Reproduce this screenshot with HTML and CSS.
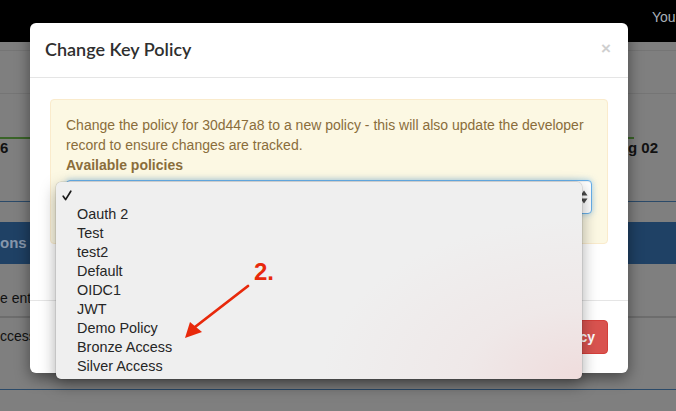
FILE: index.html
```html
<!DOCTYPE html>
<html lang="en">
<head>
<meta charset="utf-8">
<title>Change Key Policy</title>
<link rel="stylesheet" href="styles.css">
</head>
<body>
<div class="page">
  <header class="nav"><span class="nav-user">Your Account</span></header>
  <div class="sec s1"></div>
  <div class="sec s2"></div>
  <div class="sec s3"></div>
  <div class="tabline"><i class="tab-on"></i><i></i><i class="tab-on"></i><i></i></div>
  <div class="stats"><b class="stat-l">6</b><b class="stat-r">g 02</b></div>
  <div class="band"><span class="band-text">ons</span></div>
  <div class="row r-enter"><span>e entry</span></div>
  <div class="row r-access"><span>ccess</span></div>
</div>

<div class="modal">
  <div class="modal-header">
    <h4 class="modal-title">Change Key Policy</h4>
    <span class="close">&times;</span>
  </div>
  <div class="modal-body">
    <div class="alert">
      <p class="alert-text">Change the policy for 30d447a8 to a new policy - this will also update the developer record to ensure changes are tracked.</p>
      <label class="alert-label">Available policies</label>
      <div class="select">
        <svg class="select-arrows" width="8" height="14" viewBox="0 0 8 14"><path d="M4 0.5 L7.5 5.5 L0.5 5.5 Z M4 13.5 L7.5 8.5 L0.5 8.5 Z" fill="#4a4a4a"/></svg>
      </div>
    </div>
  </div>
  <div class="modal-footer">
    <button class="btn-danger">Change Policy</button>
  </div>
</div>

<ul class="popup">
  <li class="opt checked"><svg class="check" width="10" height="11" viewBox="0 0 10 11"><path d="M1.2 6.2 L3.6 9.6 L8.8 1.2" fill="none" stroke="#1a1a1a" stroke-width="1.7" stroke-linecap="round" stroke-linejoin="round"/></svg></li>
  <li class="opt">Oauth 2</li>
  <li class="opt">Test</li>
  <li class="opt">test2</li>
  <li class="opt">Default</li>
  <li class="opt">OIDC1</li>
  <li class="opt">JWT</li>
  <li class="opt">Demo Policy</li>
  <li class="opt">Bronze Access</li>
  <li class="opt">Silver Access</li>
</ul>

<span class="note">2.</span>
<svg class="arrow" width="80" height="100" viewBox="180 250 80 100">
  <line x1="248" y1="286" x2="195" y2="327" stroke="#e8290b" stroke-width="2.8" stroke-linecap="round"/>
  <path d="M185 338 L190 322 L202 332 Z" fill="#e8290b"/>
</svg>
</body>
</html>
```

FILE: styles.css
```css
* { box-sizing: border-box; }

html, body {
  margin: 0;
  padding: 0;
}

body {
  width: 676px;
  height: 411px;
  overflow: hidden;
  background: #7f7f7f;
  font-family: "Liberation Sans", Arial, sans-serif;
  font-size: 14px;
  color: #333;
  position: relative;
}

/* ---------- dimmed page behind the modal ---------- */
.page {
  width: 676px;
}

.nav {
  height: 42px;
  background: #000;
  padding-left: 652px;
  display: flex;
  align-items: center;
  white-space: nowrap;
  overflow: hidden;
}

.nav-user {
  color: #a9b0b8;
  font-size: 14px;
  margin-top: -8px;
}

.sec { border-bottom: 1px solid #757575; }
.s1 { height: 9px; }
.s2 { height: 43px; }
.s3 { height: 43px; border-bottom: none; }

.tabline {
  display: grid;
  grid-template-columns: 30px 1fr 14px 42px;
  height: 2px;
}
.tabline i { display: block; }
.tabline .tab-on { background: #3a6428; }

.stats {
  height: 63px;
  display: flex;
  justify-content: space-between;
  border-bottom: 1px solid #2b4a69;
  line-height: 18px;
  font-size: 15px;
  color: #111;
}
.stat-r { width: 48px; }

.band {
  margin-top: 20px;
  height: 42px;
  background: #1f4165;
  line-height: 42px;
}
.band-text {
  color: #8797ab;
  font-size: 15px;
  font-weight: bold;
}

.row {
  white-space: nowrap;
  color: #111;
  font-size: 14px;
  line-height: 18px;
}
.r-enter {
  height: 54px;
  padding-top: 25px;
  border-bottom: 2px solid #6d6d6d;
}
.r-access {
  height: 72px;
  padding-top: 9px;
  border-bottom: 1px solid #2b4a69;
}

/* ---------- modal ---------- */
.modal {
  position: absolute;
  left: 30px;
  top: 23px;
  width: 598px;
  height: 350px;
  background: #fff;
  border-radius: 6px;
  box-shadow: 0 5px 15px rgba(0, 0, 0, 0.45);
  display: flex;
  flex-direction: column;
}

.modal-header {
  height: 55px;
  padding: 0 17px 0 15px;
  border-bottom: 1px solid #e5e5e5;
  display: flex;
  align-items: center;
  justify-content: space-between;
}

.modal-title {
  margin: 0 0 2px;
  font-family: Lato, "Open Sans", sans-serif;
  font-size: 18px;
  font-weight: 600;
  color: #2f2f2f;
}

.close {
  font-size: 17px;
  font-weight: bold;
  color: #cfcfcf;
  line-height: 1;
  margin-bottom: 4px;
}

.modal-body {
  height: 222px;
  padding: 21px 20px 0;
}

.alert {
  background: #fcf8e3;
  border: 1px solid #faebcc;
  border-radius: 4px;
  padding: 15px 15px 29px;
  color: #8a6d3b;
  font-size: 14px;
  line-height: 20px;
}

.alert-text { margin: 0; }

.alert-label {
  display: block;
  font-weight: bold;
  margin-bottom: 5px;
}

.select {
  height: 34px;
  background: #fff;
  border: 1px solid #66afe9;
  border-radius: 4px;
  box-shadow: inset 0 1px 1px rgba(0, 0, 0, 0.075), 0 0 6px rgba(102, 175, 233, 0.6);
  display: flex;
  align-items: center;
  justify-content: flex-end;
  padding-right: 3px;
}

.modal-footer {
  border-top: 1px solid #e5e5e5;
  padding: 19px 20px 19px;
  display: flex;
  justify-content: flex-end;
}

.btn-danger {
  height: 34px;
  padding: 0 12px;
  background: #d9534f;
  border: 1px solid #d43f3a;
  border-radius: 4px;
  color: #fff;
  font-family: "Liberation Sans", Arial, sans-serif;
  font-size: 14px;
  font-weight: bold;
}

/* ---------- native select popup ---------- */
.popup {
  position: absolute;
  left: 56px;
  top: 182px;
  width: 526px;
  height: 197px;
  margin: 0;
  padding: 4px 0 3px;
  list-style: none;
  border-radius: 5px;
  background:
    radial-gradient(ellipse 260px 160px at 100% 100%, rgba(239, 220, 220, 1) 0%, rgba(239, 228, 228, 0.6) 45%, rgba(239, 239, 239, 0) 100%),
    #efefef;
  box-shadow: 0 6px 16px rgba(0, 0, 0, 0.35), 0 0 0 0.5px rgba(0, 0, 0, 0.15);
  font-family: "Liberation Sans", Arial, sans-serif;
  font-size: 14.4px;
  color: #262626;
}

.opt {
  height: 19px;
  line-height: 19px;
  padding-left: 21px;
  position: relative;
}

.check {
  position: absolute;
  left: 6px;
  top: 4px;
}

/* ---------- annotation ---------- */
.note {
  position: absolute;
  left: 254px;
  top: 258px;
  font-family: "Liberation Sans", Arial, sans-serif;
  font-size: 24px;
  font-weight: bold;
  color: #e8290b;
  line-height: 28px;
}

.arrow {
  position: absolute;
  left: 180px;
  top: 250px;
}
```
